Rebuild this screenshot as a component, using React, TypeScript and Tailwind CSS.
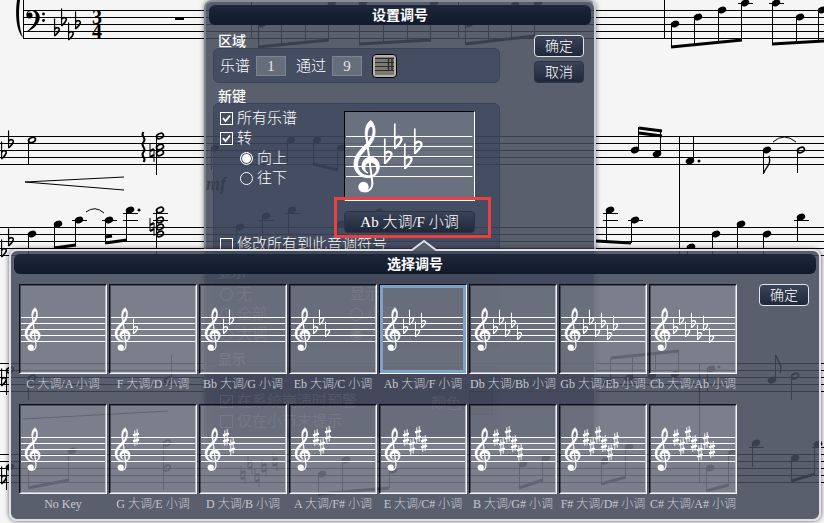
import React from "react";
import { clsx } from "clsx";

type KeySig = { label: string; flats?: number; sharps?: number };

const KEYS: KeySig[] = [
  { label: "C 大调/A 小调" },
  { label: "F 大调/D 小调", flats: 1 },
  { label: "Bb 大调/G 小调", flats: 2 },
  { label: "Eb 大调/C 小调", flats: 3 },
  { label: "Ab 大调/F 小调", flats: 4 },
  { label: "Db 大调/Bb 小调", flats: 5 },
  { label: "Gb 大调/Eb 小调", flats: 6 },
  { label: "Cb 大调/Ab 小调", flats: 7 },
  { label: "No Key" },
  { label: "G 大调/E 小调", sharps: 1 },
  { label: "D 大调/B 小调", sharps: 2 },
  { label: "A 大调/F# 小调", sharps: 3 },
  { label: "E 大调/C# 小调", sharps: 4 },
  { label: "B 大调/G# 小调", sharps: 5 },
  { label: "F# 大调/D# 小调", sharps: 6 },
  { label: "C# 大调/A# 小调", sharps: 7 },
];

// half-space steps below the top staff line
const FLAT_STEPS = [4, 1, 5, 2, 6, 3, 7];
const SHARP_STEPS = [0, 3, -1, 2, 5, 1, 4];

// glyphs are drawn for a staff space of 10
function Flat({ x, y, s }: { x: number; y: number; s: number }) {
  return (
    <g transform={`translate(${x} ${y}) scale(${s / 10})`} fill="none" stroke="currentColor">
      <path d="M0.8,-18 V7.5" strokeWidth="1.7" />
      <path d="M0.8,-2.5 C3,-6 8.2,-5.2 7.4,-1.4 C6.6,2 3,4.6 0.8,6.8" strokeWidth="2.4" />
    </g>
  );
}

function Sharp({ x, y, s }: { x: number; y: number; s: number }) {
  return (
    <g transform={`translate(${x} ${y}) scale(${s / 10})`} stroke="currentColor">
      <path d="M3,-12 V14 M7,-14 V12" strokeWidth="1.6" />
      <path d="M0,-3.5 L10,-6.5 M0,6.5 L10,3.5" strokeWidth="3.6" />
    </g>
  );
}

function Natural({ x, y }: { x: number; y: number }) {
  return (
    <g transform={`translate(${x} ${y})`} stroke="currentColor">
      <path d="M-2,-9 V4 M2,-4 V9" strokeWidth="1" />
      <path d="M-2,-2 L2,-4 M-2,4 L2,2" strokeWidth="2" />
    </g>
  );
}

function TrebleClef({ x, y, s }: { x: number; y: number; s: number }) {
  return (
    <g transform={`translate(${x} ${y}) scale(${s / 10})`}>
      <path
        fill="currentColor"
        stroke="currentColor"
        strokeWidth="0.9"
        d="M12,3.5 C10,-5 12,-13 17,-15.5 C20.5,-12 22,-6 20.5,0 C19,7 13.5,11.5 9,16.5 C5,21 3.6,25 3.6,29 C3.6,35.5 9,39.8 15,39.8 C20,39.8 23,36 22.6,32 C22.2,28 19.5,26.3 16,26.5 C12.5,26.8 10.6,29 10.8,32 C11,34.5 12.3,35.8 14,37 C10,36.2 7.8,33 8,29.5 C8.3,25 11.5,21.3 16.5,21.3 C22,21.3 25.3,25.5 25.3,30.5 C25.3,37 20.5,41.6 14,41.6 C6,41.6 0,36 0,28 C0,20 5.5,14.5 10.5,9.5 C15,5 18.5,1 19,-3.5 C19.3,-7 18.5,-9.5 17,-10 C14,-8.5 12.5,-3 13.5,3.5 Z"
      />
      <path d="M12.6,2 L18.3,46 C19,52 15,55.6 10.5,55.6" fill="none" stroke="currentColor" strokeWidth="2" />
      <circle cx="9.500" cy="51" r="5.200" fill="currentColor" />
    </g>
  );
}

function KeyStaff({ sig, space, top }: { sig: KeySig; space: number; top: number }) {
  const start = space * 4;
  return (
    <svg className="block h-full w-full text-white" aria-hidden="true">
      {[0, 1, 2, 3, 4].map((i) => (
        <rect key={i} x="1" y={top + i * space} width="98%" height="1" fill="currentColor" />
      ))}
      <TrebleClef x={space - 1} y={top} s={space} />
      {FLAT_STEPS.slice(0, sig.flats ?? 0).map((step, i) => (
        <Flat key={i} x={start - 1 + i * space} y={top + 0.5 + (step * space) / 2} s={space} />
      ))}
      {SHARP_STEPS.slice(0, sig.sharps ?? 0).map((step, i) => (
        <Sharp key={i} x={start - 1 + i * space} y={top + 0.5 + (step * space) / 2} s={space} />
      ))}
    </svg>
  );
}

// [head x, head y, stem end y, open]; stems going down hang on the left side
type Note = [number, number, number, boolean?];

const NOTES: Note[] = [
  [675, 24, 47], [698, 17, 45], [722, 10, 43], [745, 3, 40],
  [776, 3, 44], [800, 17, 43], [822, 10, 41],
  [262, 24, 47], [285, 17, 45], [309, 10, 43], [332, 3, 40],
  [363, 3, 44], [387, 17, 43], [411, 10, 41], [434, 3, 40],
  [469, 24, 44], [492, 17, 42], [515, 5, 39], [538, 3, 36],
  [32, 140, 164, true], [160, 136, 175, true], [160, 147, 175, true], [160, 153, 175, true],
  [32, 234, 262], [58, 224, 248], [79, 220, 246], [109, 220, 243], [130, 210, 240],
  [160, 210, 262, true], [160, 220, 262, true], [160, 227, 262, true], [160, 234, 262, true],
  [215, 148, 170], [291, 140, 162], [317, 140, 164], [341, 148, 170],
  [240, 227, 252], [266, 216, 250], [292, 210, 248], [341, 224, 250], [379, 212, 248],
  [635, 150, 127], [657, 154, 130], [690, 161, 137],
  [767, 150, 174], [801, 150, 173, true],
  [610, 210, 241], [635, 220, 243],
  [691, 247, 262], [716, 234, 262], [741, 224, 262], [767, 234, 262], [801, 217, 241],
  [10, 370, 395, true], [32, 378, 400, true], [168, 380, 355, true],
  [607, 382, 358], [629, 378, 356], [652, 376, 353], [675, 374, 351], [711, 369, 391],
  [772, 380, 355], [795, 376, 400, true],
  [10, 467, 490], [32, 460, 488], [72, 451, 480], [167, 443, 490, true], [167, 468, 490, true],
  [322, 474, 494], [346, 460, 492], [393, 470, 488],
  [523, 464, 488], [546, 458, 480], [605, 461, 484], [629, 447, 477],
  [710, 468, 491], [732, 453, 485], [756, 443, 467], [795, 458, 481], [818, 444, 474],
];

const BEAMS = [
  [671, 47, 742, 40], [772, 44, 824, 41], [258, 47, 329, 40], [359, 44, 431, 40], [465, 44, 535, 36],
  [54, 248, 76, 245], [105, 243, 127, 240], [105, 237, 112, 236],
  [313, 164, 338, 170], [596, 241, 631, 243], [639, 128, 662, 131], [639, 133, 662, 136],
  [611, 358, 679, 351], [28, 488, 69, 480], [318, 494, 389, 488], [519, 488, 543, 480],
  [601, 484, 626, 477], [706, 491, 729, 485], [791, 481, 815, 474],
];

const LEDGERS = [
  [741, 3], [772, 3], [75, 220], [105, 220], [126, 213], [126, 220], [156, 213], [156, 220],
  [262, 220], [288, 213], [606, 213], [606, 220], [631, 220], [797, 220], [752, 447], [815, 447],
];

const STAVES = [136, 227, 363, 454];

function Score() {
  return (
    <svg className="absolute inset-0 h-full w-full text-black" aria-hidden="true">
      <g fill="currentColor">
        {[0, 1, 2, 3, 4].map((i) => (
          <rect key={i} x="23" y={10 + i * 7} width="100%" height="1" />
        ))}
        {STAVES.map((y) =>
          [0, 1, 2, 3, 4].map((i) => <rect key={`${y}-${i}`} x="0" y={y + i * 7} width="100%" height="1" />)
        )}
        <rect x="23" y="0" width="1" height="39" />
        <rect x="664" y="0" width="1" height="39" />
        <rect x="251" y="0" width="1" height="39" />
        <rect x="458" y="0" width="1" height="39" />
        <rect x="679" y="136" width="1" height="120" />
        <rect x="699" y="363" width="1" height="120" />
        <path d="M17,0 C15,14 16,30 23,38 C19,28 18,14 20,0 Z" />
        <rect x="175" y="17" width="9" height="3" />
        {/* bass clef */}
        <circle cx="29.500" cy="15.500" r="3" />
        <path d="M26.500,15 C26,10.500 31,9.500 34,10.200 C39,11.500 41,16 39,21 C37,26 32,30 26,32 C31,28 35.500,24 35.800,17 C36,13 34,10.800 31,11 C28,11.200 27,13 27.500,15 Z" />
        <circle cx="43.500" cy="14" r="1.400" />
        <circle cx="43.500" cy="20.500" r="1.400" />
        <text x="97" y="24" textAnchor="middle" className="font-['Liberation_Serif',serif] text-[20px] font-bold">3</text>
        <text x="97" y="38" textAnchor="middle" className="font-['Liberation_Serif',serif] text-[20px] font-bold">4</text>
        <text x="206" y="190" className="font-['Liberation_Serif',serif] text-[18px] font-bold italic">mf</text>
        <circle cx="139" cy="210" r="1.500" />
        <circle cx="699" cy="161" r="1.500" />
        <circle cx="719" cy="367" r="1.500" />
      </g>
      <Flat x={54} y={31} s={7} />
      <Flat x={61} y={21} s={7} />
      <Flat x={68} y={35} s={7} />
      <Flat x={75} y={24} s={7} />
      <Flat x={8} y={143} s={7} />
      <Flat x={1} y={154} s={7} />
      <Flat x={8} y={241} s={7} />
      <Flat x={1} y={252} s={7} />
      <Flat x={1} y={381} s={7} />
      <Flat x={1} y={479} s={7} />
      <Natural x={152} y={153} />
      <Natural x={152} y={227} />
      <Natural x={243} y={475} />
      <Natural x={250} y={465} />
      <Natural x={257} y={478} />
      <Natural x={264} y={468} />
      <Natural x={275} y={462} />
      <g fill="none" stroke="currentColor">
        <path d="M124,177 L25,182 L124,190" />
        <path d="M23,419 L168,411" />
        <path d="M86,212 Q95,205 104,213 M773,142 Q784,132 796,142" />
        <path d="M143.500,132 q-2,2.500 0,5 q2,2.500 0,5 q-2,2.500 0,5 q2,2.500 0,5 q-2,2.500 0,5 q2,2.500 0,5" strokeWidth="2" />
        <path d="M764,173 C764,168 772,166 769,156 M776,355 C777,362 783,364 780,373" strokeWidth="1.400" />
      </g>
      {NOTES.map(([x, y, end, open], i) => {
        const stemX = end > y ? x - 4 : x + 3;
        return (
          <g key={i}>
            <rect x={stemX} y={Math.min(y, end)} width="1" height={Math.abs(end - y)} fill="currentColor" />
            <ellipse
              cx={x}
              cy={y}
              rx={open ? 3.6 : 4.4}
              ry={open ? 2.4 : 3.2}
              transform={`rotate(-24 ${x} ${y})`}
              fill={open ? "none" : "currentColor"}
              stroke={open ? "currentColor" : "none"}
              strokeWidth="1.7"
            />
          </g>
        );
      })}
      {BEAMS.map(([x1, y1, x2, y2], i) => (
        <line key={i} x1={x1} y1={y1} x2={x2} y2={y2} stroke="currentColor" strokeWidth="3" />
      ))}
      {LEDGERS.map(([x, y], i) => (
        <rect key={i} x={x - 3} y={y} width="15" height="1" fill="currentColor" />
      ))}
    </svg>
  );
}

function TitleBar({ children }: { children: React.ReactNode }) {
  return (
    <h2 className="flex h-5 items-center justify-center rounded-md bg-gradient-to-b from-[#1f273b] to-[#101a2b] text-sm font-bold leading-5 text-white">
      {children}
    </h2>
  );
}

function PushButton({ children, primary }: { children: React.ReactNode; primary?: boolean }) {
  return (
    <button
      type="button"
      className={clsx(
        "flex h-[22px] w-[50px] items-center justify-center rounded border bg-gradient-to-b from-[#3a4358] to-[#20283b] text-sm font-light leading-5 text-white",
        primary ? "border-[#e4e6ea]" : "border-[#2b3346]"
      )}
    >
      {children}
    </button>
  );
}

function CheckRow({ label, checked }: { label: string; checked?: boolean }) {
  return (
    <label className="flex h-5 items-center gap-1">
      <span className="grid shrink-0">
        <input
          type="checkbox"
          defaultChecked={checked}
          className="peer col-start-1 row-start-1 h-[13px] w-[13px] appearance-none border border-white"
        />
        <svg className="pointer-events-none invisible col-start-1 row-start-1 h-[13px] w-[13px] peer-checked:visible" viewBox="0 0 13 13">
          <path d="M3,6 L5.500,9 L10,3.500" fill="none" stroke="white" strokeWidth="1.800" />
        </svg>
      </span>
      <span className="whitespace-nowrap">{label}</span>
    </label>
  );
}

function RadioRow({ label, name, checked }: { label: string; name: string; checked?: boolean }) {
  return (
    <label className="flex h-5 items-center gap-1">
      <input
        type="radio"
        name={name}
        defaultChecked={checked}
        className="h-[13px] w-[13px] shrink-0 appearance-none rounded-full border border-white shadow-[inset_0_0_0_1px_#3c4557] checked:bg-white"
      />
      <span className="whitespace-nowrap">{label}</span>
    </label>
  );
}

function Group({ title, className, children }: { title: string; className?: string; children: React.ReactNode }) {
  return (
    <section className={className}>
      <h3 className="h-[13px] pl-[5px] text-sm font-medium leading-[13px]">{title}</h3>
      <div className="rounded-md border border-[#3a4458] bg-[#2e3c53]/50 px-[6px]">{children}</div>
    </section>
  );
}

const FIELD = "h-5 w-[30px] border border-[#7c8391] bg-[#666d7b] text-center font-['Liberation_Serif',serif] text-[15px] text-[#e3e5e9]";

function KeyDialog() {
  return (
    <div className="absolute left-[204px] top-0 h-[440px] w-[392px] rounded-lg border-2 border-[#c9cbd1] border-l-[#7d818c] border-t-[#8a8e98] bg-[#43485a]/87 px-[3px] pt-[3px] text-[15px] font-light leading-5 text-white shadow-[0_0_5px_rgba(0,0,0,0.5)]">
      <TitleBar>设置调号</TitleBar>
      <div className="flex justify-between pl-1 pr-[7px] pt-[10px]">
        <div className="w-[287px]">
          <Group title="区域">
            <div className="flex h-[33px] items-center">
              <label className="flex items-center gap-[6px]">
                乐谱
                <input className={FIELD} defaultValue="1" />
              </label>
              <label className="ml-[10px] flex items-center gap-[6px]">
                通过
                <input className={FIELD} defaultValue="9" />
              </label>
              <button
                type="button"
                aria-label="选择范围"
                className="ml-[10px] h-6 w-[25px] rounded border border-black bg-[#b3b2b0] p-[2px]"
              >
                <svg viewBox="0 0 19 18" preserveAspectRatio="none" className="block h-full w-full bg-[#7d7872]">
                  <path d="M0,1.500 H19 M0,5.500 H19 M0,9.500 H19 M0,13.500 H19" stroke="#2f2d2b" />
                  <path d="M13.500,1 V14 M17,1 V14" stroke="#2f2d2b" strokeWidth="1.500" />
                </svg>
              </button>
            </div>
          </Group>
          <Group title="新键" className="mt-[7px]">
            <div className="flex pt-1">
              <div className="w-[124px]">
                <CheckRow label="所有乐谱" checked />
                <CheckRow label="转" checked />
                <div className="pl-5">
                  <RadioRow name="direction" label="向上" checked />
                  <RadioRow name="direction" label="往下" />
                </div>
              </div>
              <div className="flex w-[131px] flex-col gap-[10px] pb-px pt-[3px]">
                <div className="h-[90px] border border-b-white border-l-black border-r-white border-t-black bg-white/20">
                  <KeyStaff sig={KEYS[4]} space={10} top={24} />
                </div>
                <div className="relative">
                  <button
                    type="button"
                    className="flex h-[22px] w-full items-center justify-center whitespace-nowrap rounded border border-[#2b3346] bg-gradient-to-b from-[#3a4358] to-[#20283b] font-['Liberation_Serif','Noto_Sans_CJK_SC',serif]"
                  >
                    Ab 大调/F 小调
                  </button>
                  <span className="pointer-events-none absolute -bottom-[5px] -left-[10px] -right-[16px] -top-[14px] border-[3px] border-[#e8413f]" />
                </div>
              </div>
            </div>
            <div className="pb-1">
              <CheckRow label="修改所有到此音调符号" />
            </div>
          </Group>
          <Group title="显示" className="mt-[7px] opacity-70">
            <div className="flex py-1">
              <div className="w-[130px]">
                <RadioRow name="scope" label="无" />
                <RadioRow name="scope" label="全部" />
                <RadioRow name="scope" label="大调" />
              </div>
              <div>
                <p>显示:</p>
                <RadioRow name="mode" label="小调" />
                <RadioRow name="mode" label="大调" checked />
              </div>
            </div>
          </Group>
          <Group title="显示" className="mt-1 opacity-70">
            <div className="flex justify-between pb-1 pt-6">
              <div>
                <CheckRow label="在系统崩溃时预警" checked />
                <CheckRow label="仅在小节末提示" />
              </div>
              <div className="flex h-6 items-center gap-2">
                颜色
                <span className="h-6 w-6 border border-black bg-[#20283b]" />
              </div>
            </div>
          </Group>
        </div>
        <div className="flex flex-col gap-1">
          <PushButton primary>确定</PushButton>
          <PushButton>取消</PushButton>
        </div>
      </div>
    </div>
  );
}

function KeyPicker() {
  const [selected, setSelected] = React.useState(4);
  return (
    <div className="absolute left-[9px] right-[3px] top-[249px] rounded-lg border-2 border-[#dfe0e4] bg-[#43485a]/87 px-[3px] pb-[5px] pt-[3px] shadow-[0_0_5px_rgba(0,0,0,0.6)]">
      <svg className="absolute -top-[12px] left-[399px] h-[12px] w-[28px]" viewBox="0 0 28 12">
        <path d="M2,12 L14,2 L26,12 Z" fill="#5a5f6c" />
        <path d="M2,11 L14,2 L26,11" fill="none" stroke="#dfe0e4" strokeWidth="2" />
      </svg>
      <TitleBar>选择调号</TitleBar>
      <div className="flex items-start gap-[22px] pl-[5px] pr-[7px] pt-[10px]">
        <div className="grid flex-1 grid-cols-8 gap-x-[2px] gap-y-[10px]">
          {KEYS.map((sig, i) => (
            <button key={sig.label} type="button" onClick={() => setSelected(i)} className="min-w-0">
              <span className="relative block h-[90px] border border-b-[#f4f4f6] border-l-[#0b0e18] border-r-[#f4f4f6] border-t-[#0b0e18] bg-white/20 shadow-[inset_1px_1px_0_rgba(20,24,36,0.5),inset_-1px_-1px_0_rgba(230,230,235,0.6)]">
                {selected === i && <span className="absolute inset-0 border-[3px] border-[#7fa3c8]" />}
                <KeyStaff sig={sig} space={6} top={32} />
              </span>
              <span className="flex h-5 items-center justify-center whitespace-nowrap font-['Liberation_Serif','Noto_Sans_CJK_SC',serif] text-xs font-light text-[#c6c9d0]">
                {sig.label}
              </span>
            </button>
          ))}
        </div>
        <PushButton primary>确定</PushButton>
      </div>
    </div>
  );
}

export default function App() {
  return (
    <main className="relative h-screen min-h-[523px] overflow-hidden bg-[#f5f5f5] font-['Liberation_Sans','Noto_Sans_CJK_SC',sans-serif]">
      <Score />
      <KeyDialog />
      <KeyPicker />
    </main>
  );
}
